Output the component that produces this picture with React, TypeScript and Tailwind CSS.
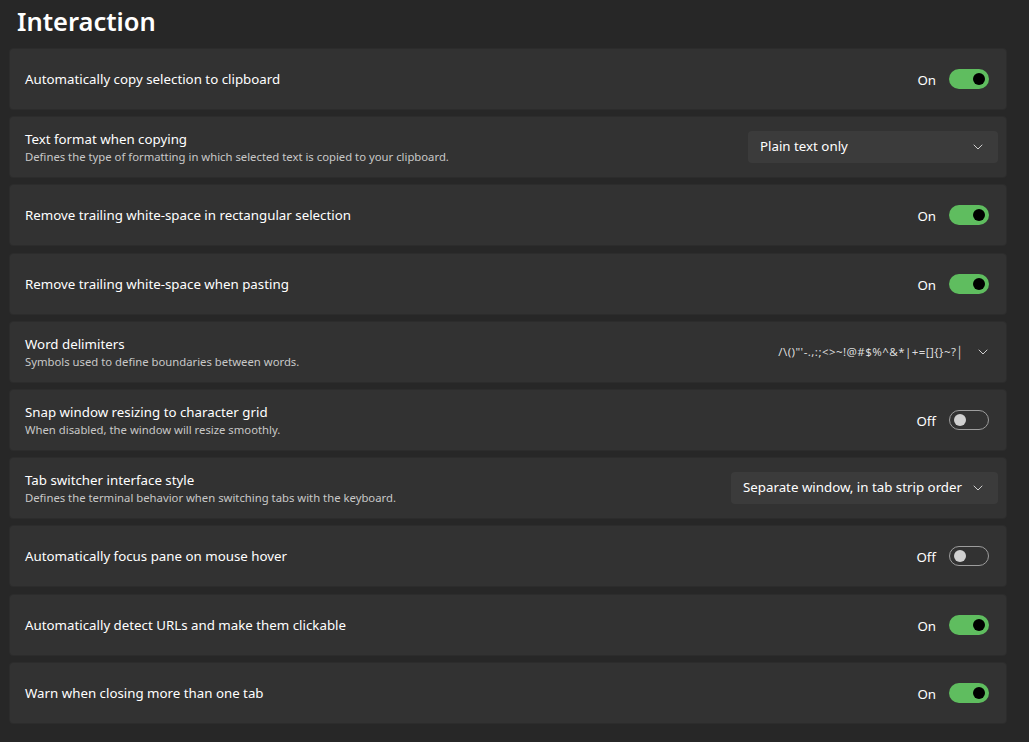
import React from "react";

type Row =
  | { kind: "toggle"; title: string; desc?: string; on: boolean }
  | { kind: "select"; title: string; desc?: string; value: string; width: string }
  | { kind: "delims"; title: string; desc?: string; value: string };

const rows: Row[] = [
  { kind: "toggle", title: "Automatically copy selection to clipboard", on: true },
  {
    kind: "select",
    title: "Text format when copying",
    desc: "Defines the type of formatting in which selected text is copied to your clipboard.",
    value: "Plain text only",
    width: "w-[250px]",
  },
  { kind: "toggle", title: "Remove trailing white-space in rectangular selection", on: true },
  { kind: "toggle", title: "Remove trailing white-space when pasting", on: true },
  {
    kind: "delims",
    title: "Word delimiters",
    desc: "Symbols used to define boundaries between words.",
    value: "/\\()\"'-.,:;<>~!@#$%^&*|+=[]{}~?\u2502",
  },
  {
    kind: "toggle",
    title: "Snap window resizing to character grid",
    desc: "When disabled, the window will resize smoothly.",
    on: false,
  },
  {
    kind: "select",
    title: "Tab switcher interface style",
    desc: "Defines the terminal behavior when switching tabs with the keyboard.",
    value: "Separate window, in tab strip order",
    width: "w-[267px]",
  },
  { kind: "toggle", title: "Automatically focus pane on mouse hover", on: false },
  { kind: "toggle", title: "Automatically detect URLs and make them clickable", on: true },
  { kind: "toggle", title: "Warn when closing more than one tab", on: true },
];

function Chevron() {
  return (
    <svg width="10" height="6" viewBox="0 0 10 6" fill="none" className="shrink-0">
      <path d="M1 1l4 4 4-4" stroke="#cfcfcf" strokeWidth="1" strokeLinecap="round" strokeLinejoin="round" />
    </svg>
  );
}

function Toggle({ on }: { on: boolean }) {
  return (
    <div className="flex items-center gap-[13px] pr-[17px]">
      <span className="text-[13.3px] leading-[20px] pt-[2px] text-white w-[24px] text-right">{on ? "On" : "Off"}</span>
      {on ? (
        <div className="w-[40px] h-[20px] rounded-full bg-[#5fbd5f] flex items-center justify-end pr-[4px]">
          <div className="w-[12px] h-[12px] rounded-full bg-black" />
        </div>
      ) : (
        <div className="w-[40px] h-[20px] rounded-full border border-[#9d9d9d] flex items-center pl-[4px]">
          <div className="w-[12px] h-[12px] rounded-full bg-[#d0d0d0]" />
        </div>
      )}
    </div>
  );
}

export default function App() {
  return (
    <div
      className="min-h-[742px] w-full bg-[#272727] text-white pl-[9px] pr-[22px] pt-[3px]"
      style={{ fontFamily: '"Noto Sans", "Open Sans", sans-serif' }}
    >
      <h1 className="text-[25.5px] leading-[37px] font-semibold pl-[8px] mb-[8px]">Interaction</h1>
      <div className="flex flex-col gap-[6.2px]">
        {rows.map((r) => (
          <div
            key={r.title}
            className="h-[62px] rounded-[4px] bg-[#323232] border border-[#2c2c2c] flex items-center justify-between pl-[15px]"
          >
            <div className="flex flex-col">
              <span className="text-[13.3px] leading-[20px] text-white">{r.title}</span>
              {r.desc && <span className="text-[11.3px] leading-[16px] text-[#c8c8c8]">{r.desc}</span>}
            </div>
            {r.kind === "toggle" && <Toggle on={r.on} />}
            {r.kind === "select" && (
              <div
                className={`${r.width} h-[32px] mr-[8px] rounded-[4px] bg-[#3b3b3b] flex items-center justify-between pl-[12px] pr-[15px]`}
              >
                <span className="text-[13.3px] text-white">{r.value}</span>
                <Chevron />
              </div>
            )}
            {r.kind === "delims" && (
              <div className="flex items-center gap-[14px] pr-[18px]">
                <span className="text-[11.5px] text-[#dcdcdc] tracking-[0.45px]">{r.value}</span>
                <Chevron />
              </div>
            )}
          </div>
        ))}
      </div>
    </div>
  );
}
